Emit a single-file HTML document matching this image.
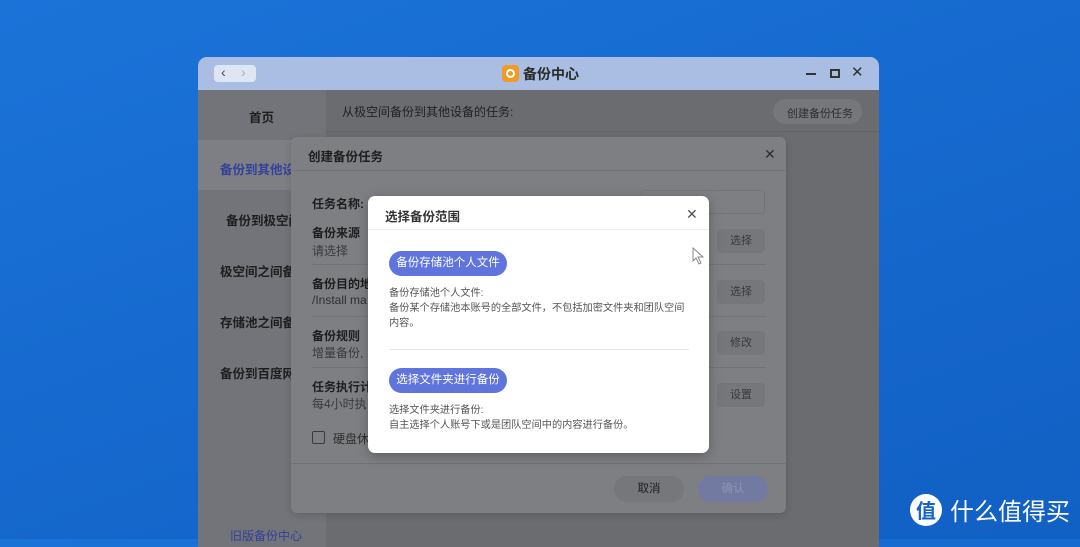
<!DOCTYPE html>
<html><head><meta charset="utf-8"><style>
*{margin:0;padding:0;box-sizing:border-box}
body{width:1080px;height:539px;overflow:hidden;position:relative;font-family:"Liberation Sans","Noto Sans CJK SC",sans-serif;background:linear-gradient(160deg,#1b73d8 0%,#1567cc 60%,#1160c4 100%)}
.abs{position:absolute}
.win{left:198px;top:57px;width:681px;height:490px;border-radius:9px 9px 0 0;overflow:hidden;background:#6a6c70}
.tb{left:0;top:0;width:681px;height:33px;background:#a9bee2}
.side{left:0;top:33px;width:128px;height:460px;background:#727479}
.t{position:absolute;white-space:nowrap}
.dlg{left:291px;top:137px;width:495px;height:376px;background:#7e7f83;border-radius:6px;box-shadow:0 2px 8px rgba(0,0,0,.15)}
.m{left:368px;top:196px;width:341px;height:257px;background:#fff;border-radius:7px;box-shadow:0 3px 12px rgba(0,0,0,.25)}
.pill{position:absolute;background:#5f74dc;color:#fff;font-size:11.5px;border-radius:13px;text-align:center;line-height:25px;width:118px;height:25px}
.sb{position:absolute;background:#76777b;border-radius:4px;width:48px;height:24px;line-height:24px;text-align:center;font-size:11px;color:#3a3a3a}
</style></head><body>
<div class="abs win">
 <div class="abs tb">
  <div class="abs" style="left:16px;top:8px;width:42px;height:17px;background:#dfe6f3;border-radius:4px"></div>
  <div class="t" style="left:23px;top:7px;font-size:14px;color:#444">‹</div>
  <div class="t" style="left:43px;top:7px;font-size:14px;color:#aab">›</div>
  <div class="abs" style="left:304px;top:8px;width:17px;height:17px;border-radius:4px;background:#f29b24"></div>
  <div class="abs" style="left:308px;top:12px;width:9px;height:9px;border-radius:50%;border:2px solid #fff"></div>
  <div class="t" style="left:325px;top:7px;font-size:14px;font-weight:bold;color:#2a2a2a">备份中心</div>
  <div class="abs" style="left:608px;top:16px;width:10px;height:2px;background:#333"></div>
  <div class="abs" style="left:632px;top:12px;width:10px;height:9px;border:2px solid #333"></div>
  <div class="t" style="left:653px;top:6px;font-size:15px;color:#333">✕</div>
 </div>
 <div class="abs side"></div>
 <div class="abs" style="left:0;top:83px;width:128px;height:50px;background:#7d7f84"></div>
 <div class="t" style="left:51px;top:50px;font-size:12.5px;font-weight:bold;color:#1e1e1e">首页</div>
 <div class="t" style="left:22px;top:102px;font-size:12.5px;font-weight:bold;color:#33419a">备份到其他设</div>
 <div class="t" style="left:28px;top:153px;font-size:12.5px;font-weight:bold;color:#1e1e1e">备份到极空间</div>
 <div class="t" style="left:22px;top:204px;font-size:12.5px;font-weight:bold;color:#1e1e1e">极空间之间备</div>
 <div class="t" style="left:22px;top:255px;font-size:12.5px;font-weight:bold;color:#1e1e1e">存储池之间备</div>
 <div class="t" style="left:22px;top:306px;font-size:12.5px;font-weight:bold;color:#1e1e1e">备份到百度网</div>
 <div class="t" style="left:32px;top:470px;font-size:12px;color:#33419a">旧版备份中心</div>
 <div class="t" style="left:144px;top:46px;font-size:12px;color:#222">从极空间备份到其他设备的任务:</div>
 <div class="abs" style="left:128px;top:74px;width:553px;height:1px;background:#626468"></div>
 <div class="abs" style="left:575px;top:42px;width:89px;height:25px;border-radius:13px;background:#75777b"></div>
 <div class="t" style="left:589px;top:48px;font-size:11px;color:#2e2e2e">创建备份任务</div>
</div>
<div class="abs dlg">
 <div class="t" style="left:17px;top:9px;font-size:12.5px;font-weight:bold;color:#1e1e1e">创建备份任务</div>
 <div class="t" style="left:473px;top:9px;font-size:14px;color:#2e2e2e">✕</div>
 <div class="abs" style="left:0;top:33px;width:495px;height:1px;background:#727377"></div>
 <div class="t" style="left:21px;top:58px;font-size:12px;font-weight:bold;color:#1e1e1e">任务名称:</div>
 <div class="abs" style="left:350px;top:53px;width:124px;height:24px;border:1px solid #737478;border-radius:3px"></div>
 <div class="t" style="left:21px;top:87px;font-size:12px;font-weight:bold;color:#1e1e1e">备份来源</div>
 <div class="t" style="left:21px;top:105px;font-size:12px;color:#3a3a3a">请选择</div>
 <div class="t" style="left:21px;top:138px;font-size:12px;font-weight:bold;color:#1e1e1e">备份目的地</div>
 <div class="t" style="left:21px;top:156px;font-size:12px;color:#2e2e2e">/Install ma</div>
 <div class="t" style="left:21px;top:190px;font-size:12px;font-weight:bold;color:#1e1e1e">备份规则</div>
 <div class="t" style="left:21px;top:207px;font-size:12px;color:#3a3a3a">增量备份,</div>
 <div class="t" style="left:21px;top:241px;font-size:12px;font-weight:bold;color:#1e1e1e">任务执行计</div>
 <div class="t" style="left:21px;top:258px;font-size:12px;color:#3a3a3a">每4小时执</div>
 <div class="abs" style="left:21px;top:294px;width:13px;height:13px;border:1px solid #3a3a3a;border-radius:2px"></div>
 <div class="t" style="left:42px;top:293px;font-size:12px;color:#2e2e2e">硬盘休</div>
 <div class="abs" style="left:21px;top:127px;width:454px;height:1px;background:#737478"></div>
 <div class="abs" style="left:21px;top:179px;width:454px;height:1px;background:#737478"></div>
 <div class="abs" style="left:21px;top:230px;width:454px;height:1px;background:#737478"></div>
 <div class="sb" style="left:426px;top:92px">选择</div>
 <div class="sb" style="left:426px;top:143px">选择</div>
 <div class="sb" style="left:426px;top:194px">修改</div>
 <div class="sb" style="left:426px;top:246px">设置</div>
 <div class="abs" style="left:0;top:326px;width:495px;height:1px;background:#727377"></div>
 <div class="abs" style="left:323px;top:339px;width:70px;height:26px;border-radius:13px;background:#76777b;text-align:center;line-height:26px;font-size:11.5px;color:#1e1e1e">取消</div>
 <div class="abs" style="left:407px;top:339px;width:70px;height:26px;border-radius:13px;background:#737aa2;text-align:center;line-height:26px;font-size:11.5px;color:#8d93b3">确认</div>
</div>
<div class="abs m">
 <div class="t" style="left:17px;top:10px;font-size:12.5px;font-weight:bold;color:#333">选择备份范围</div>
 <div class="t" style="left:318px;top:10px;font-size:14px;color:#555">✕</div>
 <div class="abs" style="left:0;top:33px;width:341px;height:1px;background:#eee"></div>
 <div class="pill" style="left:21px;top:55px">备份存储池个人文件</div>
 <div class="t" style="left:21px;top:90px;font-size:10.2px;line-height:15px;color:#555">备份存储池个人文件:<br>备份某个存储池本账号的全部文件，不包括加密文件夹和团队空间<br>内容。</div>
 <div class="abs" style="left:21px;top:153px;width:300px;height:1px;background:#e6e6e6"></div>
 <div class="pill" style="left:21px;top:172px">选择文件夹进行备份</div>
 <div class="t" style="left:21px;top:207px;font-size:10.2px;line-height:15px;color:#555">选择文件夹进行备份:<br>自主选择个人账号下或是团队空间中的内容进行备份。</div>
</div>
<svg class="abs" style="left:692px;top:247px" width="14" height="18" viewBox="0 0 14 18"><path d="M1 1 L1 14 L4 11 L7 17 L9 16 L6 10 L11 10 Z" fill="#fff" stroke="#888" stroke-width="1"/></svg>
<div class="abs" style="left:910px;top:494px;width:32px;height:32px;border-radius:50%;background:#fff;color:#1565c8;font-size:20px;font-weight:bold;text-align:center;line-height:32px;font-family:'Noto Sans CJK SC',sans-serif">值</div>
<div class="t" style="left:950px;top:495px;font-size:24px;color:#fff;font-family:'Noto Sans CJK SC',sans-serif;line-height:30px">什么值得买</div>
</body></html>
